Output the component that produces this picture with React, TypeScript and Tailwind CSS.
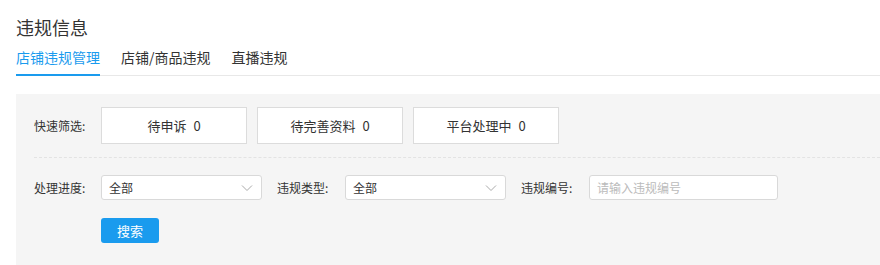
import React from "react";

const font = { fontFamily: '"Noto Sans CJK SC", "Noto Sans", sans-serif' };

function Chevron() {
  return (
    <svg width="12" height="8" viewBox="0 0 12 8" fill="none" className="mr-[8px]">
      <path d="M1 1.5 L6 6.5 L11 1.5" stroke="#aaaaaa" strokeWidth="1" />
    </svg>
  );
}

function Select({ w }: { w: string }) {
  return (
    <div
      className={`${w} h-[25px] bg-white border border-[#d9d9d9] rounded-[3px] flex items-center justify-between pl-[7px] text-[12px] text-[#333]`}
    >
      <span>全部</span>
      <Chevron />
    </div>
  );
}

function QuickBox({ label }: { label: string }) {
  return (
    <div className="w-[146px] h-[37px] bg-white border border-[#dcdcdc] flex items-center justify-center text-[13px] text-[#333]">
      <span>{label}</span>
      <span className="ml-[7px]">0</span>
    </div>
  );
}

export default function App() {
  return (
    <div className="w-[880px] h-[265px] overflow-hidden bg-white pl-4" style={font}>
      <div className="pt-[15px] h-[47px]">
        <div className="text-[18px] leading-[24px] text-[#333]">违规信息</div>
      </div>
      <div className="flex gap-[21px] border-b border-[#e8e8e8] text-[14px] leading-[20px]">
        <div className="text-[#1a9bee] pb-[7px] border-b-2 border-[#1a9bee] -mb-px">店铺违规管理</div>
        <div className="text-[#333] pb-[7px]">店铺/商品违规</div>
        <div className="text-[#333] pb-[7px]">直播违规</div>
      </div>
      <div className="mt-[18px] bg-[#f5f5f5] h-[200px] pl-[18px] pt-[13px]">
        <div className="flex items-center">
          <div className="w-[67px] text-[12px] text-[#333]">快速筛选:</div>
          <div className="flex gap-[10px]">
            <QuickBox label="待申诉" />
            <QuickBox label="待完善资料" />
            <QuickBox label="平台处理中" />
          </div>
        </div>
        <div className="mt-[13px] border-t border-dashed border-[#e3e3e3]" />
        <div className="mt-[17px] flex items-center text-[12px] text-[#333]">
          <div className="w-[67px]">处理进度:</div>
          <Select w="w-[161px]" />
          <div className="ml-[15px] w-[68px]">违规类型:</div>
          <Select w="w-[161px]" />
          <div className="ml-[15px] w-[68px]">违规编号:</div>
          <div className="w-[189px] h-[25px] bg-white border border-[#d9d9d9] rounded-[3px] flex items-center pl-[7px] text-[#bbb]">
            请输入违规编号
          </div>
        </div>
        <div className="mt-[18px] pl-[67px]">
          <button className="w-[58px] h-[25px] bg-[#1a9bee] rounded-[3px] text-white text-[13px] flex items-center justify-center">
            搜索
          </button>
        </div>
      </div>
    </div>
  );
}
